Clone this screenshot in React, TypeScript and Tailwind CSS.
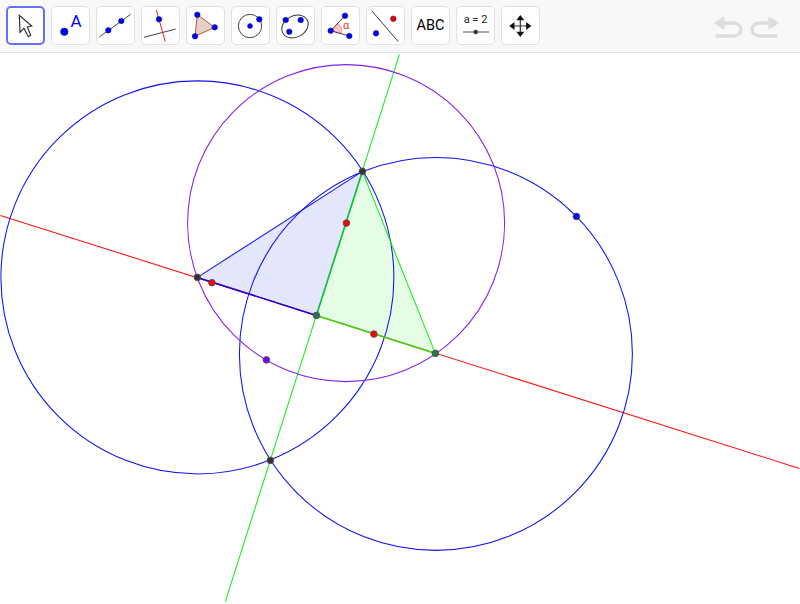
import type { ReactNode } from 'react';

const BLUE = '#0000ff';

function Dot({ x, y, r = 2.8, fill = BLUE }: { x: number; y: number; r?: number; fill?: string }) {
  return <circle cx={x} cy={y} r={r} fill={fill} stroke="#1c1c50" strokeWidth={0.5} />;
}

function ToolButton({ active, children }: { active?: boolean; children: ReactNode }) {
  return (
    <div
      className={
        active
          ? 'h-[39px] w-[39px] shrink-0 rounded-[5px] border-2 border-[#6a6ef5] bg-white'
          : 'h-[39px] w-[39px] shrink-0 rounded-[5px] border border-[#e0e0e0] bg-white'
      }
    >
      {children}
    </div>
  );
}

function Glyph({ children, active }: { children: ReactNode; active?: boolean }) {
  // button-local coordinates, the border is drawn over by the svg's overflow
  return (
    <svg
      width={39}
      height={39}
      viewBox="0 0 39 39"
      className={active ? '-m-[2px] block' : '-m-px block'}
      fill="none"
    >
      {children}
    </svg>
  );
}

function Tools() {
  return (
    <div className="flex gap-[6px]">
      <ToolButton active>
        <Glyph active>
          <path d="M13.3 9.3 14 26.3 18 22.3 22.3 30.7 24.7 29.3 21.3 21 25.7 20Z" fill="#fff" stroke="#333" strokeWidth={1.2} />
        </Glyph>
      </ToolButton>
      <ToolButton>
        <Glyph>
          <Dot x={13.3} y={25.7} r={3.8} />
          <text x={25} y={20.8} textAnchor="middle" fontSize={17} fill="#0000ff" fontFamily="Roboto, sans-serif">A</text>
        </Glyph>
      </ToolButton>
      <ToolButton>
        <Glyph>
          <path d="M3.3 31 34.7 8.3" stroke="#444" strokeWidth={1} />
          <Dot x={12.3} y={24.3} />
          <Dot x={25.3} y={15} />
        </Glyph>
      </ToolButton>
      <ToolButton>
        <Glyph>
          <path d="M3 31.3 34.7 23" stroke="#444" strokeWidth={1} />
          <path d="M15.3 4 24.3 35.7" stroke="#f02020" strokeWidth={1} />
          <Dot x={18} y={13.3} />
        </Glyph>
      </ToolButton>
      <ToolButton>
        <Glyph>
          <path d="M11.3 8.7 28.7 21.3 9 30.3Z" fill="#e8d0c6" stroke="#a9583f" strokeWidth={1} />
          <Dot x={11.3} y={8.7} />
          <Dot x={28.7} y={21.3} />
          <Dot x={9} y={30.3} />
        </Glyph>
      </ToolButton>
      <ToolButton>
        <Glyph>
          <circle cx={19} cy={20} r={11.7} stroke="#444" strokeWidth={1} />
          <Dot x={19} y={20} r={2.5} />
          <Dot x={28.3} y={13.3} />
        </Glyph>
      </ToolButton>
      <ToolButton>
        <Glyph>
          <ellipse cx={19} cy={20.5} rx={13.8} ry={10.6} transform="rotate(-28 19 20.5)" stroke="#333" strokeWidth={1} />
          <Dot x={9.7} y={14} />
          <Dot x={24.7} y={14} />
          <Dot x={13.3} y={25.7} />
        </Glyph>
      </ToolButton>
      <ToolButton>
        <Glyph>
          <path d="M9.7 24.7 L17.4 17.4 A10.6 10.6 0 0 1 20.6 27.6Z" fill="#fbc4c4" stroke="#f07070" strokeWidth={0.6} />
          <path d="M24 9.7 9.7 24.7 28.3 30" stroke="#444" strokeWidth={1} />
          <Dot x={24} y={9.7} />
          <Dot x={9.7} y={24.7} />
          <Dot x={28.3} y={30} />
          <text x={25} y={23} textAnchor="middle" fontSize={11} fill="#f03030" fontFamily="Roboto, sans-serif">α</text>
        </Glyph>
      </ToolButton>
      <ToolButton>
        <Glyph>
          <path d="M5.7 4.7 32.3 35.7" stroke="#444" strokeWidth={1} />
          <Dot x={27.3} y={12.7} fill="#f00000" />
          <Dot x={10} y={27.3} />
        </Glyph>
      </ToolButton>
      <ToolButton>
        <div className="flex h-full items-center justify-center font-['Roboto',sans-serif] text-[14.5px] text-black">ABC</div>
      </ToolButton>
      <ToolButton>
        <div className="flex h-full flex-col items-center">
          <span className="mt-[7px] font-['Roboto',sans-serif] text-[11px] leading-[12px] text-[#222]">a = 2</span>
          <svg width={26} height={6} viewBox="0 0 26 6" className="mt-[3px] block" fill="none">
            <path d="M0 3H26" stroke="#555" strokeWidth={1} />
            <circle cx={12.7} cy={3} r={2.2} fill="#333" />
          </svg>
        </div>
      </ToolButton>
      <ToolButton>
        <Glyph>
          <path d="M19.3 12V28M11 20H27.6" stroke="#333" strokeWidth={1.2} />
          <path d="M19.3 9 23.3 14.3H15.3ZM19.3 31 23.3 25.7H15.3ZM8.2 20 13.5 16V24ZM30.4 20 25.1 16V24Z" fill="#111" />
        </Glyph>
      </ToolButton>
    </div>
  );
}

function UndoRedo() {
  return (
    <svg width={66} height={24} viewBox="0 0 66 24" className="block" fill="none">
      <path d="M0.5 8 10 2V14Z" fill="#dcdcdc" stroke="#dcdcdc" strokeWidth={1} />
      <path d="M9 8H19C24 8 27 11 27 14.5 27 18 24 21 19 21H1.5" stroke="#dcdcdc" strokeWidth={3.4} />
      <path d="M64.5 8 55 2V14Z" fill="#dcdcdc" stroke="#dcdcdc" strokeWidth={1} />
      <path d="M56 8H46C41 8 38 11 38 14.5 38 18 41 21 46 21H63.5" stroke="#dcdcdc" strokeWidth={3.4} />
    </svg>
  );
}

function Construction() {
  return (
    <svg width={800} height={551} viewBox="0 53 800 551" className="block" fill="none">
      <g transform="translate(0.4 0.4)">
        <path d="M197 277 362 171 316 315Z" fill="#e4e6fb" />
        <path d="M316 315 362 171 435 353Z" fill="#e5fce5" />

        <path d="M0 215 799 468" stroke="#ff1010" strokeWidth={1.05} />
        <path d="M399 54 225 601" stroke="#10f010" strokeWidth={1.05} />

        <circle cx={197} cy={277} r={196.5} stroke="#1010f0" strokeWidth={1.05} />
        <circle cx={435.5} cy={353.5} r={196.5} stroke="#1010f0" strokeWidth={1.05} />
        <circle cx={345.7} cy={222.7} r={158.5} stroke="#8420f0" strokeWidth={1.05} />

        <path d="M197 277 362 171" stroke="#1010f0" strokeWidth={1.05} />
        <path d="M197 277 316 315" stroke="#2000e0" strokeWidth={1.6} />
        <path d="M316 315 362 171" stroke="#10c040" strokeWidth={1.6} />
        <path d="M362 171 435 353" stroke="#10f010" strokeWidth={1.05} />
        <path d="M316 315 435 353" stroke="#44d010" strokeWidth={1.6} />

        <Point x={197} y={277} fill="#333" />
        <Point x={362} y={171} fill="#333" />
        <Point x={316} y={315} fill="#1f7a55" />
        <Point x={435} y={353} fill="#1f7a3a" />
        <Point x={270} y={460} fill="#333" />
        <Point x={211.5} y={282.3} fill="#ff0000" />
        <Point x={346} y={222.7} fill="#ff0000" />
        <Point x={373.5} y={333.7} fill="#ff0000" />
        <Point x={576} y={216} fill="#0000ff" />
        <Point x={266} y={359.5} fill="#7f00ff" />
      </g>
    </svg>
  );
}

function Point({ x, y, fill }: { x: number; y: number; fill: string }) {
  return <circle cx={x} cy={y} r={3.3} fill={fill} stroke="#555" strokeWidth={1} />;
}

export default function App() {
  return (
    <div className="flex h-[604px] w-[800px] flex-col overflow-hidden bg-white">
      <div className="flex h-[53px] shrink-0 items-start justify-between border-b border-[#e0e0e0] bg-[#f8f8f8] pl-[6px] pr-[20px] pt-[6px]">
        <Tools />
        <div className="mt-[9px]">
          <UndoRedo />
        </div>
      </div>
      <Construction />
    </div>
  );
}
